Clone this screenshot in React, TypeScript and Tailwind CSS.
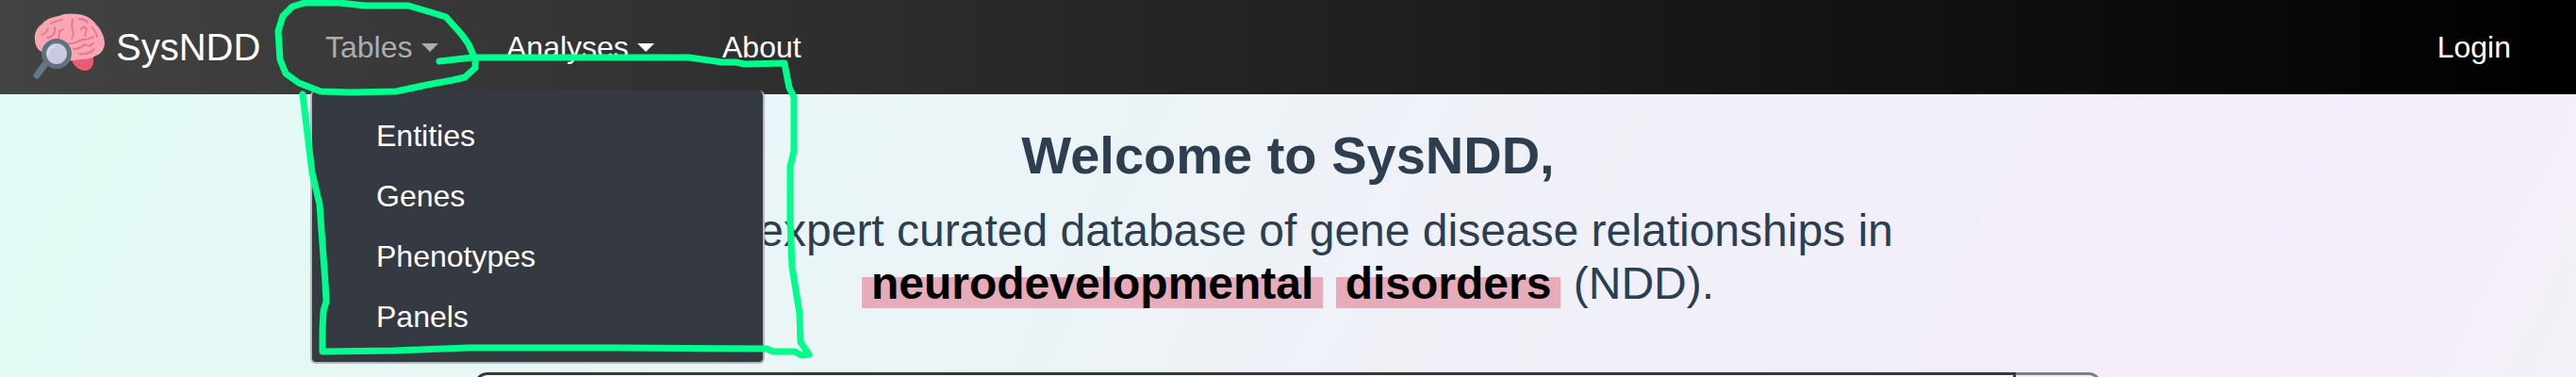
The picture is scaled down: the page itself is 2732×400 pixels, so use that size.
// App.tsx
const navFont = "font-['Liberation_Sans',Arial,sans-serif]"

const tableItems = ['Entities', 'Genes', 'Phenotypes', 'Panels']

function BrainLogo() {
  return (
    <svg viewBox="34 12 80 76" className="w-[80px] h-[76px] shrink-0">
      <path d="M75 62 C78 70 84 75 90 75 C97 75 100 68 99 61 Z" fill="#ec5b74" />
      <path
        d="M37 42 C36 36 39 29 45 25 C49 20 56 18 62 17 C68 14 76 14 82 15 C90 15 98 20 102 26 C108 32 111 40 111 47 C110 53 107 57 102 59 C97 62 92 63 86 63 L60 66 C52 62 46 59 44 55 C39 52 37 47 37 42 Z"
        fill="#f8a6b4"
      />
      <g fill="none" stroke="#ee7389" strokeWidth="1.8" strokeLinecap="round" strokeLinejoin="round">
        <path d="M54 25 C58 22 62 22 66 21" />
        <path d="M44 37 C48 36 50 33 51 30" />
        <path d="M50 40 C55 40 57 36 58 34 L58 29" />
        <path d="M62 42 L63 33 L67 31" />
        <path d="M77 21 L76 28 L78 36 L76 41" />
        <path d="M84 20 C88 20 91 21 93 24" />
        <path d="M86 31 L89 28 L92 30 L90 38" />
        <path d="M98 29 C100 32 102 35 103 39" />
        <path d="M66 46 C74 47 82 45 87 42 C92 42 96 41 99 39" />
        <path d="M78 52 C84 52 88 49 90 47 L95 49 C97 47 98 46 99 46" />
        <path d="M84 57 C90 58 96 56 100 52" />
      </g>
      <path d="M47 69 L39 80" stroke="#64788a" strokeWidth="7" strokeLinecap="round" />
      <circle cx="60" cy="57" r="13.5" fill="#cbc9df" stroke="#5f7280" strokeWidth="5" />
      <path d="M51 58 C51 53 54 50 58 49" fill="none" stroke="#dddcec" strokeWidth="2" strokeLinecap="round" />
    </svg>
  )
}

function Caret({ muted }: { muted?: boolean }) {
  return (
    <span
      className={`inline-block w-0 h-0 border-x-[9px] border-x-transparent border-t-[9px] ml-[9px] mb-[4px] align-middle ${
        muted ? 'border-t-[#adadad]' : 'border-t-white'
      }`}
    />
  )
}

function Navbar() {
  return (
    <nav className={`h-[100px] flex items-center bg-[linear-gradient(to_right,#434343,#000000)] pl-[34px] pr-[69px] ${navFont}`}>
      <BrainLogo />
      <span className="text-white text-[40px] ml-[9px] w-[222px]">SysNDD</span>
      <span className="text-[#adadad] text-[32px] w-[192px]">Tables<Caret muted /></span>
      <span className="text-white text-[32px] w-[229px]">Analyses<Caret /></span>
      <span className="text-white text-[32px]">About</span>
      <span className="text-white text-[32px] ml-auto">Login</span>
    </nav>
  )
}

function TablesMenu() {
  return (
    <div className="absolute left-[329px] top-[96px] w-[482px] h-[290px] bg-[#353a42] rounded-[6px] border-l-2 border-r-2 border-b-2 border-[#b4bbbd] border-t-0 pt-[16px]">
      {tableItems.map((item) => (
        <div key={item} className="h-[64px] pl-[68px] flex items-center text-white text-[32px]">
          {item}
        </div>
      ))}
    </div>
  )
}

function Annotations() {
  return (
    <svg viewBox="0 0 2732 400" className="absolute inset-0 w-[2732px] h-[400px] pointer-events-none">
      <g fill="none" stroke="#00fd8d" strokeWidth="7" strokeLinecap="round" strokeLinejoin="round">
        <path d="M323 3 L360 3 L387 6 L433 6 L457 13 L473 18 L490 37 L497 47 L504 63 L504 72 L493 82 L480 85 L453 90 L420 97 L373 98 L340 97 L317 88 L303 78 L297 63 L295 33 L300 17 L310 7 Z" />
        <path d="M466 65 L501 61 L731 61 L766 66 L780 66 L790 68 L832 67 L835 83 L837 93 L842 103 L842 160 L838 177 L838 233 L840 283 L848 333 L849 363 L858 376 L850 377 L843 373 L820 373 L813 370 L655 369 L497 369 L418 372 L342 373 L342 350 L343 330 L346 320 L345 300 L339 217 L331 183 L327 150 L321 100" />
      </g>
    </svg>
  )
}

export default function App() {
  return (
    <div className={`relative h-[400px] overflow-hidden ${navFont}`}>
      <Navbar />
      <main className="h-[300px] bg-[linear-gradient(115deg,#e2fbf5_0%,#eef2f7_50%,#f5ecfa_88%,#f3f0f7_100%)] flex flex-col items-center text-[#2c3e50]">
        <h1 className="text-[56px] font-bold leading-[64px] mt-[33px]">Welcome to SysNDD,</h1>
        <p className="text-[48px] leading-[56px] mt-[20px] text-center">
          the expert curated database of gene disease relationships in
          <br />
          <span className="font-bold text-black px-[10px] bg-[linear-gradient(transparent_37%,#e8abb9_37%)]">neurodevelopmental</span>{' '}
          <span className="font-bold text-black px-[10px] bg-[linear-gradient(transparent_37%,#e8abb9_37%)]">disorders</span>{' '}
          (NDD).
        </p>
        <div className="flex w-[1726px] h-[60px] mt-[66px] shrink-0">
          <input className="flex-1 bg-white border-[3px] border-[#343a40] rounded-l-[14px] outline-none" />
          <button className="w-[91px] border-[3px] border-l-0 border-[#7f7f86] rounded-r-[14px]" />
        </div>
      </main>
      <TablesMenu />
      <Annotations />
    </div>
  )
}
